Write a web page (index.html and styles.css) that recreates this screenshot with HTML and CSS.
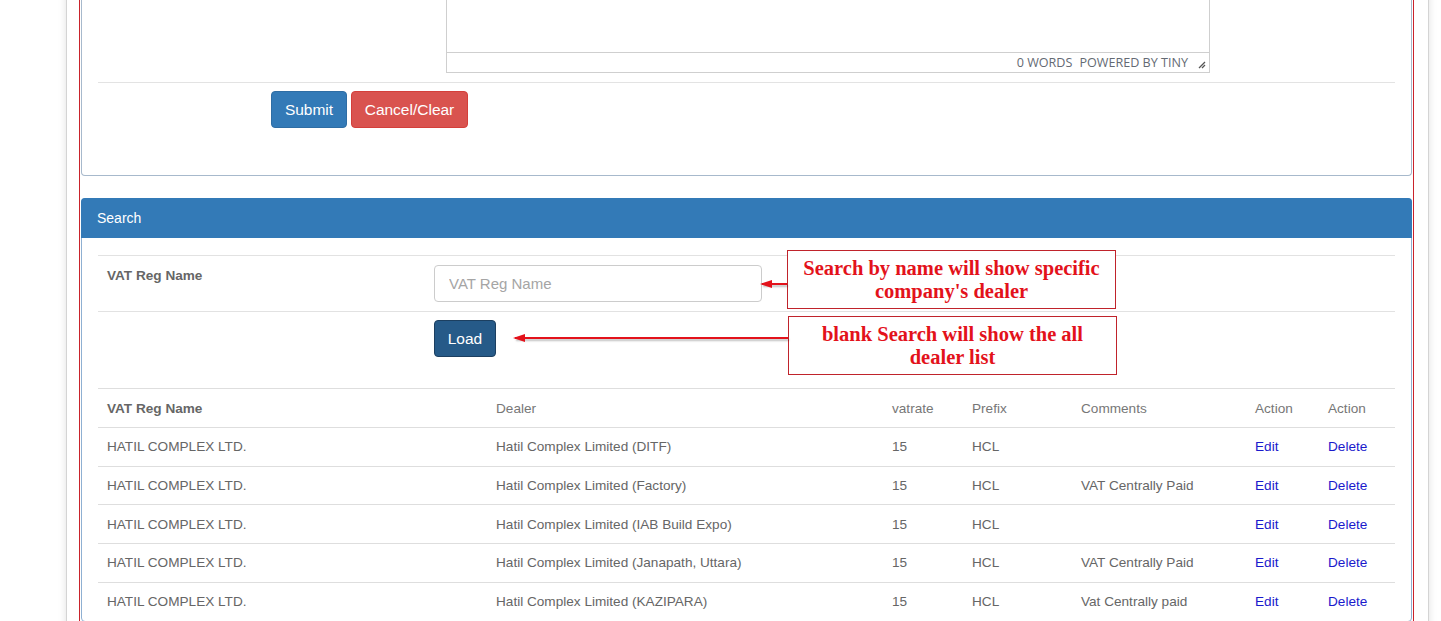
FILE: index.html
```html
<!DOCTYPE html>
<html lang="en">
<head>
<meta charset="utf-8">
<title>VAT Dealer</title>
<link rel="stylesheet" href="styles.css">
</head>
<body>
<div class="page">
  <div class="frame">
    <div class="panel panel-top">
      <div class="panel-body">
        <div class="form-row editor-row">
          <div class="label-col"></div>
          <div class="editor">
            <div class="editor-area"></div>
            <div class="editor-status">
              <span>0 WORDS</span>
              <span>POWERED BY TINY</span>
              <svg class="resize" width="9" height="9" viewBox="0 0 9 9"><path d="M8 2 L2 8 M8 5 L5 8" stroke="#555" stroke-width="1.3" fill="none"/></svg>
            </div>
          </div>
        </div>
        <hr class="sep">
        <div class="actions">
          <button class="btn btn-primary">Submit</button>
          <button class="btn btn-danger">Cancel/Clear</button>
        </div>
      </div>
    </div>

    <div class="panel panel-search">
      <div class="panel-heading">Search</div>
      <div class="panel-body search-body">
        <div class="search-row row-name">
          <label class="search-label">VAT Reg Name</label>
          <input class="input" type="text" placeholder="VAT Reg Name">
        </div>
        <div class="search-row row-load">
          <div class="search-label"></div>
          <button class="btn btn-load">Load</button>
        </div>
        <table class="grid">
          <colgroup>
            <col class="c1"><col class="c2"><col class="c3"><col class="c4"><col class="c5"><col class="c6"><col class="c7">
          </colgroup>
          <thead>
            <tr><th class="strong">VAT Reg Name</th><th>Dealer</th><th>vatrate</th><th>Prefix</th><th>Comments</th><th>Action</th><th>Action</th></tr>
          </thead>
          <tbody>
            <tr><td>HATIL COMPLEX LTD.</td><td>Hatil Complex Limited (DITF)</td><td>15</td><td>HCL</td><td></td><td><a href="#">Edit</a></td><td><a href="#">Delete</a></td></tr>
            <tr><td>HATIL COMPLEX LTD.</td><td>Hatil Complex Limited (Factory)</td><td>15</td><td>HCL</td><td>VAT Centrally Paid</td><td><a href="#">Edit</a></td><td><a href="#">Delete</a></td></tr>
            <tr><td>HATIL COMPLEX LTD.</td><td>Hatil Complex Limited (IAB Build Expo)</td><td>15</td><td>HCL</td><td></td><td><a href="#">Edit</a></td><td><a href="#">Delete</a></td></tr>
            <tr><td>HATIL COMPLEX LTD.</td><td>Hatil Complex Limited (Janapath, Uttara)</td><td>15</td><td>HCL</td><td>VAT Centrally Paid</td><td><a href="#">Edit</a></td><td><a href="#">Delete</a></td></tr>
            <tr><td>HATIL COMPLEX LTD.</td><td>Hatil Complex Limited (KAZIPARA)</td><td>15</td><td>HCL</td><td>Vat Centrally paid</td><td><a href="#">Edit</a></td><td><a href="#">Delete</a></td></tr>
          </tbody>
        </table>
      </div>
    </div>
  </div>
</div>

<div class="note note-1">Search by name will show specific<br>company's dealer</div>
<div class="arrow arrow-1"></div>
<div class="note note-2">blank Search will show the all<br>dealer list</div>
<div class="arrow arrow-2"></div>
</body>
</html>
```

FILE: styles.css
```css
html, body {
  margin: 0;
  padding: 0;
  background: #fff;
  overflow: hidden;
}
body {
  font-family: "Liberation Sans", Arial, sans-serif;
  font-size: 13.6px;
  color: #666;
}
.page {
  margin: -80px 0 0 66px;
  width: 1363px;
  border-left: 1px solid #d4d4d4;
  border-right: 1px solid #d4d4d4;
  box-shadow: 0 0 8px rgba(0,0,0,0.12);
  padding: 0 14px 40px 12px;
  box-sizing: border-box;
  background: #fff;
}
.frame {
  border: 1px solid #c9232b;
  border-top: none;
  padding: 0 1px 20px 1px;
}
.panel {
  border: 1px solid #a7b9cc;
  border-radius: 4px;
  background: #fff;
}
.panel-top {
  border-top-left-radius: 0;
  border-top-right-radius: 0;
  border-top: none;
}
.panel-top .panel-body {
  padding: 0 16px 47px 16px;
}
.form-row {
  display: flex;
}
.label-col {
  width: 348px;
  flex: none;
}
.editor {
  width: 764px;
  border: 1px solid #cfcfcf;
  box-sizing: border-box;
}
.editor-area {
  height: 131px;
}
.editor-status {
  border-top: 1px solid #cfcfcf;
  height: 19px;
  display: flex;
  justify-content: flex-end;
  align-items: center;
  gap: 7px;
  padding-right: 3px;
  font-family: "Open Sans", "Liberation Sans", sans-serif;
  font-size: 12.6px;
  color: #646a73;
}
.resize {
  margin-left: 2px;
  margin-top: 4px;
}
.sep {
  border: none;
  border-top: 1px solid #e3e3e3;
  margin: 9px 0 8px 0;
}
.actions {
  display: flex;
  gap: 4px;
  padding-left: 173px;
}
.btn {
  font-family: "Liberation Sans", Arial, sans-serif;
  font-size: 15.5px;
  height: 37px;
  padding: 0 12px;
  border-radius: 4px;
  border: 1px solid transparent;
  color: #fff;
  cursor: pointer;
}
.btn-primary {
  background: #337ab7;
  border-color: #2e6da4;
  width: 76px;
}
.btn-danger {
  background: #d9534f;
  border-color: #d43f3a;
  width: 117px;
}
.panel-search {
  margin-top: 22px;
  border-color: #8fb0d2;
}
.panel-heading {
  background: #337ab7;
  color: #fff;
  height: 40px;
  line-height: 40px;
  padding: 0 16px;
  margin: -1px -1px 0 -1px;
  border-radius: 4px 4px 0 0;
  font-size: 14px;
}
.search-body {
  padding: 17px 16px 0 16px;
}
.search-row {
  display: flex;
  border-top: 1px solid #e2e2e2;
}
.row-name {
  height: 46px;
  padding-top: 9px;
}
.row-load {
  height: 68px;
  padding-top: 8px;
}
.search-label {
  width: 336px;
  box-sizing: border-box;
  flex: none;
  padding-left: 9px;
  padding-top: 3px;
  font-weight: bold;
  color: #666;
  font-size: 13.6px;
  line-height: 16px;
}
.input {
  width: 328px;
  height: 37px;
  box-sizing: border-box;
  border: 1px solid #ccc;
  border-radius: 4px;
  padding: 0 14px;
  font-family: "Liberation Sans", Arial, sans-serif;
  font-size: 15px;
  color: #555;
}
.input::placeholder {
  color: #a5a5a5;
}
.btn-load {
  background: #265a88;
  border-color: #1c3f60;
  width: 62px;
  height: 37px;
}
.grid {
  width: 100%;
  border-collapse: collapse;
  table-layout: fixed;
}
.c1 { width: 389px; }
.c2 { width: 396px; }
.c3 { width: 80px; }
.c4 { width: 109px; }
.c5 { width: 174px; }
.c6 { width: 73px; }
.grid th, .grid td {
  text-align: left;
  font-weight: normal;
  padding: 0 9px;
  height: 38.7px;
  box-sizing: border-box;
  border-top: 1px solid #dedede;
  white-space: nowrap;
  vertical-align: middle;
}
.grid th {
  color: #777;
  height: 39px;
}
.grid th.strong {
  font-weight: bold;
  color: #666;
}
.grid a {
  color: #1a1acc;
  text-decoration: none;
}
.note {
  position: absolute;
  width: 329px;
  height: 59px;
  box-sizing: border-box;
  border: 1px solid #c0232b;
  background: #fff;
  color: #e3121b;
  font-family: "Liberation Serif", "Times New Roman", serif;
  font-weight: bold;
  font-size: 20.5px;
  line-height: 23px;
  text-align: center;
  display: flex;
  align-items: center;
  justify-content: center;
}
.note-1 { left: 787px; top: 250px; }
.note-2 { left: 788px; top: 316px; }
.arrow {
  position: absolute;
  height: 2px;
  background: #e3121b;
  box-shadow: 1px 2px 2px rgba(0,0,0,0.25);
}
.arrow::before {
  content: "";
  position: absolute;
  left: -2px;
  top: -3px;
  border-top: 4px solid transparent;
  border-bottom: 4px solid transparent;
  border-right: 12px solid #e3121b;
}
.arrow-1 { left: 762px; top: 283px; width: 25px; }
.arrow-2 { left: 515px; top: 337px; width: 273px; }
```
